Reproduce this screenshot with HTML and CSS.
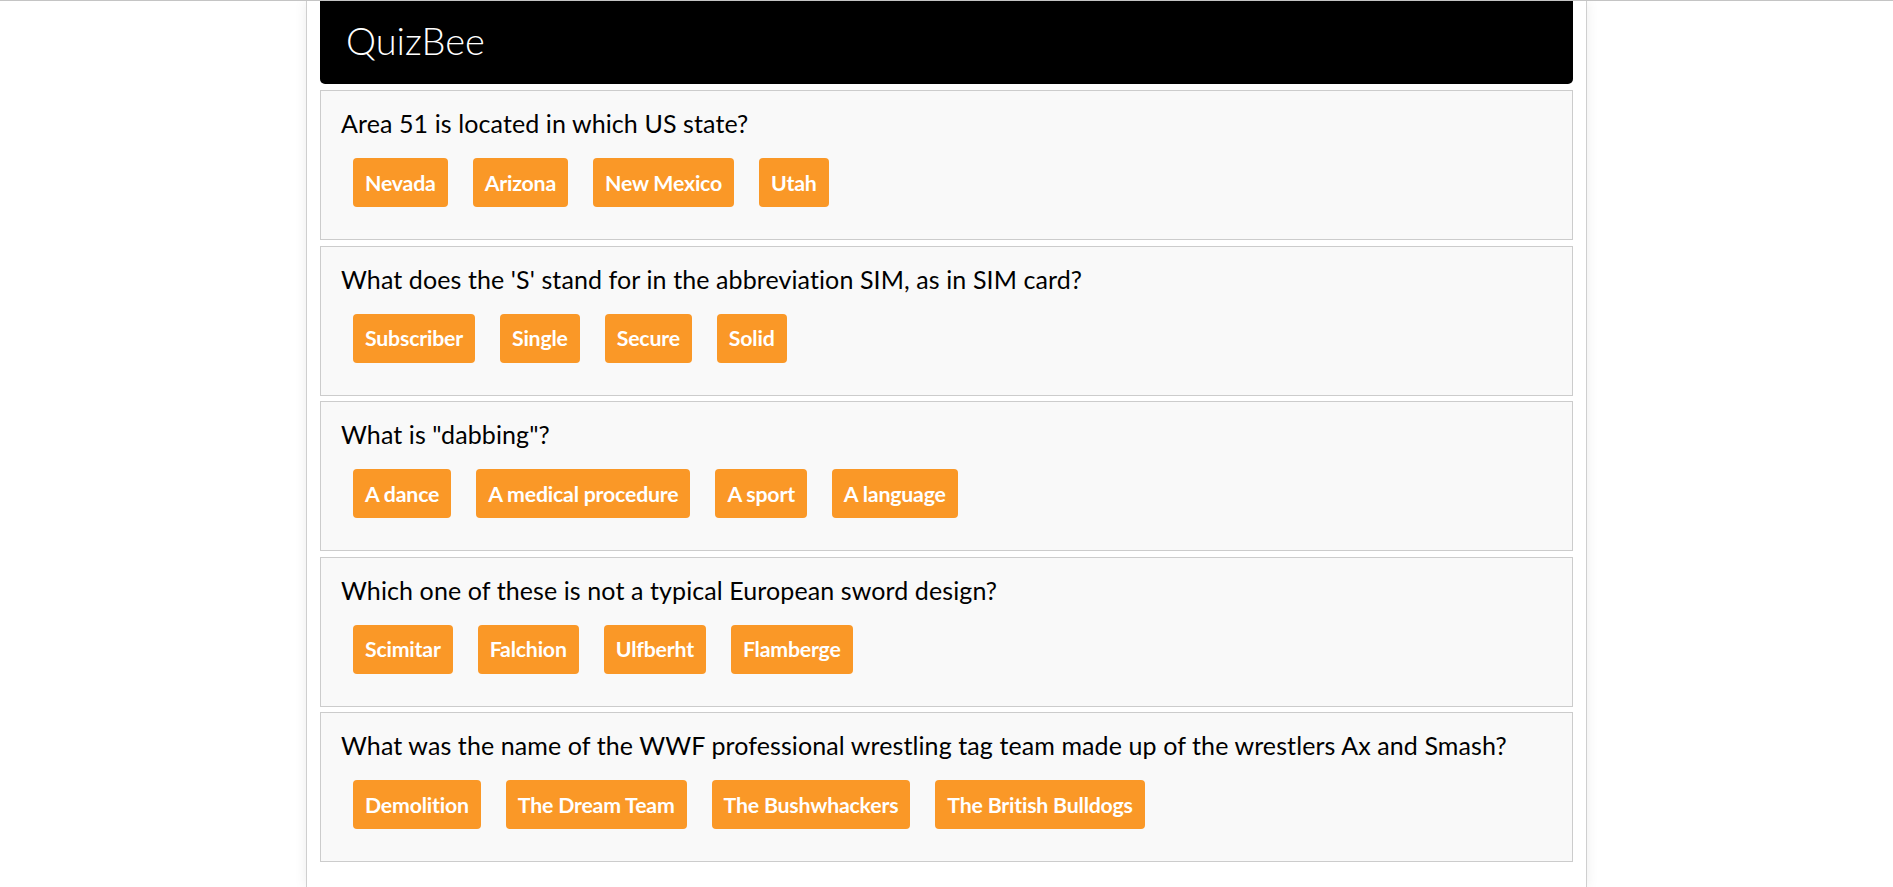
FILE: index.html
```html
<!DOCTYPE html>
<html>
<head>
<meta charset="utf-8">
<title>QuizBee</title>
<link rel="stylesheet" href="styles.css">
</head>
<body>
<div class="container">
  <header class="title-bar"><span class="title">QuizBee</span></header>
  <div class="question-box">
    <div class="question">Area 51 is located in which US state?</div>
    <div class="answers">
      <button class="answer">Nevada</button>
      <button class="answer">Arizona</button>
      <button class="answer">New Mexico</button>
      <button class="answer">Utah</button>
    </div>
  </div>
  <div class="question-box">
    <div class="question">What does the 'S' stand for in the abbreviation SIM, as in SIM card?</div>
    <div class="answers">
      <button class="answer">Subscriber</button>
      <button class="answer">Single</button>
      <button class="answer">Secure</button>
      <button class="answer">Solid</button>
    </div>
  </div>
  <div class="question-box">
    <div class="question">What is &quot;dabbing&quot;?</div>
    <div class="answers">
      <button class="answer">A dance</button>
      <button class="answer">A medical procedure</button>
      <button class="answer">A sport</button>
      <button class="answer">A language</button>
    </div>
  </div>
  <div class="question-box">
    <div class="question">Which one of these is not a typical European sword design?</div>
    <div class="answers">
      <button class="answer">Scimitar</button>
      <button class="answer">Falchion</button>
      <button class="answer">Ulfberht</button>
      <button class="answer">Flamberge</button>
    </div>
  </div>
  <div class="question-box">
    <div class="question">What was the name of the WWF professional wrestling tag team made up of the wrestlers Ax and Smash?</div>
    <div class="answers">
      <button class="answer">Demolition</button>
      <button class="answer">The Dream Team</button>
      <button class="answer">The Bushwhackers</button>
      <button class="answer">The British Bulldogs</button>
    </div>
  </div>
</div>
</body>
</html>
```
FILE: styles.css
```css
* { box-sizing: border-box; }
html, body { margin: 0; padding: 0; }
body {
  background: #ffffff;
  border-top: 1px solid #c4c4c4;
  font-family: Lato, "Open Sans", sans-serif;
  color: #000;
}
.container {
  width: 1281px;
  margin: 0 auto;
  min-height: 886px;
  padding: 0 13px;
  border-left: 1px solid #cfcfcf;
  border-right: 1px solid #cfcfcf;
  box-shadow: 0 0 12px rgba(0,0,0,0.08);
  background: #fff;
}
.title-bar {
  height: 83px;
  background: #000;
  border-radius: 0 0 5px 5px;
  display: flex;
  align-items: center;
  padding: 0 26px 6px;
}
.title {
  color: #fff;
  font-weight: 300;
  font-size: 38px;
}
.question-box {
  margin-top: 5.5px;
  background: #f9f9f9;
  border: 1px solid #cccccc;
  height: 150px;
  padding: 18px 20px 0;
}
.question-box:first-of-type {
  margin-top: 6px;
}
.question {
  font-size: 25px;
  line-height: 29px;
  letter-spacing: 0.1px;
}
.answers {
  display: flex;
  gap: 25px;
  margin-top: 20px;
  padding-left: 12px;
}
.answer {
  height: 49px;
  padding: 0 12px;
  border: none;
  border-radius: 4px;
  background: #fa9827;
  color: #fff;
  font-family: Lato, "Open Sans", sans-serif;
  font-weight: 700;
  font-size: 21.3px;
  letter-spacing: -0.2px;
  cursor: pointer;
}
```
